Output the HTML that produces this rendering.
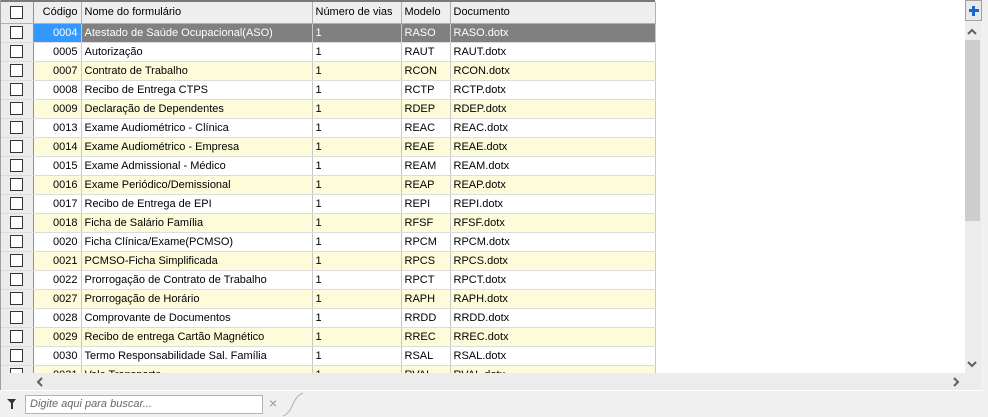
<!DOCTYPE html>
<html><head><meta charset="utf-8"><style>
*{margin:0;padding:0;box-sizing:border-box}
body{width:988px;height:417px;background:#f0f0f0;font-family:"Liberation Sans",sans-serif;font-size:11px;color:#000;position:relative;overflow:hidden}
#grid{position:absolute;left:0;top:0;width:965px;height:373px;background:#fff;overflow:hidden;border-left:1px solid #a0a0a0}
table{border-collapse:collapse;table-layout:fixed;position:absolute;left:0;top:0}
td,th{height:19px;border-right:1px solid #c8c8c8;border-bottom:1px solid #dcdcdc;padding:0 3px;white-space:nowrap;overflow:hidden;font-weight:normal;text-align:left}
th{height:22px;background:#eeeeee;border-top:2px solid #7a7a7a;border-right:1px solid #b0b0b0;border-bottom:1px solid #b0b0b0}
td.cb,th.cb{background:#ececec;border-right:1px solid #909090;padding:0}
.box{width:13px;height:13px;border:1px solid #333;background:#fff;margin-left:9px}
td.c{text-align:right}
tr.y td{background:#fdfbd9}
tr.y td.cb{background:#ececec}
tr.s td{background:#808080;color:#fff}
tr.s td.c{background:#3399ff}
tr.s td.cb{background:#ececec}
</style></head><body>
<div id="grid"><table>
<colgroup><col style="width:32px"><col style="width:48px"><col style="width:231px"><col style="width:89px"><col style="width:49px"><col style="width:205px"></colgroup>
<tr><th class="cb"><div class="box"></div></th><th style="text-align:right">Código</th><th>Nome do formulário</th><th>Número de vias</th><th>Modelo</th><th>Documento</th></tr>
<tr class="s"><td class="cb"><div class="box"></div></td><td class="c">0004</td><td>Atestado de Saúde Ocupacional(ASO)</td><td>1</td><td>RASO</td><td>RASO.dotx</td></tr>
<tr><td class="cb"><div class="box"></div></td><td class="c">0005</td><td>Autorização</td><td>1</td><td>RAUT</td><td>RAUT.dotx</td></tr>
<tr class="y"><td class="cb"><div class="box"></div></td><td class="c">0007</td><td>Contrato de Trabalho</td><td>1</td><td>RCON</td><td>RCON.dotx</td></tr>
<tr><td class="cb"><div class="box"></div></td><td class="c">0008</td><td>Recibo de Entrega CTPS</td><td>1</td><td>RCTP</td><td>RCTP.dotx</td></tr>
<tr class="y"><td class="cb"><div class="box"></div></td><td class="c">0009</td><td>Declaração de Dependentes</td><td>1</td><td>RDEP</td><td>RDEP.dotx</td></tr>
<tr><td class="cb"><div class="box"></div></td><td class="c">0013</td><td>Exame Audiométrico - Clínica</td><td>1</td><td>REAC</td><td>REAC.dotx</td></tr>
<tr class="y"><td class="cb"><div class="box"></div></td><td class="c">0014</td><td>Exame Audiométrico - Empresa</td><td>1</td><td>REAE</td><td>REAE.dotx</td></tr>
<tr><td class="cb"><div class="box"></div></td><td class="c">0015</td><td>Exame Admissional - Médico</td><td>1</td><td>REAM</td><td>REAM.dotx</td></tr>
<tr class="y"><td class="cb"><div class="box"></div></td><td class="c">0016</td><td>Exame Periódico/Demissional</td><td>1</td><td>REAP</td><td>REAP.dotx</td></tr>
<tr><td class="cb"><div class="box"></div></td><td class="c">0017</td><td>Recibo de Entrega de EPI</td><td>1</td><td>REPI</td><td>REPI.dotx</td></tr>
<tr class="y"><td class="cb"><div class="box"></div></td><td class="c">0018</td><td>Ficha de Salário Família</td><td>1</td><td>RFSF</td><td>RFSF.dotx</td></tr>
<tr><td class="cb"><div class="box"></div></td><td class="c">0020</td><td>Ficha Clínica/Exame(PCMSO)</td><td>1</td><td>RPCM</td><td>RPCM.dotx</td></tr>
<tr class="y"><td class="cb"><div class="box"></div></td><td class="c">0021</td><td>PCMSO-Ficha Simplificada</td><td>1</td><td>RPCS</td><td>RPCS.dotx</td></tr>
<tr><td class="cb"><div class="box"></div></td><td class="c">0022</td><td>Prorrogação de Contrato de Trabalho</td><td>1</td><td>RPCT</td><td>RPCT.dotx</td></tr>
<tr class="y"><td class="cb"><div class="box"></div></td><td class="c">0027</td><td>Prorrogação de Horário</td><td>1</td><td>RAPH</td><td>RAPH.dotx</td></tr>
<tr><td class="cb"><div class="box"></div></td><td class="c">0028</td><td>Comprovante de Documentos</td><td>1</td><td>RRDD</td><td>RRDD.dotx</td></tr>
<tr class="y"><td class="cb"><div class="box"></div></td><td class="c">0029</td><td>Recibo de entrega Cartão Magnético</td><td>1</td><td>RREC</td><td>RREC.dotx</td></tr>
<tr><td class="cb"><div class="box"></div></td><td class="c">0030</td><td>Termo Responsabilidade Sal. Família</td><td>1</td><td>RSAL</td><td>RSAL.dotx</td></tr>
<tr class="y"><td class="cb"><div class="box"></div></td><td class="c">0031</td><td>Vale Transporte</td><td>1</td><td>RVAL</td><td>RVAL.dotx</td></tr>
</table>
<div style="position:absolute;left:654px;top:0;width:311px;height:2px;background:#fff"></div>
</div>
<div style="position:absolute;left:965px;top:0;width:17px;height:21px;border:1px solid #a0a0a0;background:#e8e8e8"></div>
<div style="position:absolute;left:969px;top:9px;width:10px;height:3px;background:#1a66cc"></div>
<div style="position:absolute;left:972px;top:6px;width:3px;height:10px;background:#1a66cc"></div>
<div style="position:absolute;left:965px;top:22px;width:16px;height:369px;background:#ececec"></div>
<div style="position:absolute;left:965px;top:40px;width:15px;height:181px;background:#cdcdcd"></div>
<svg style="position:absolute;left:967px;top:28px" width="10" height="8"><path d="M1 6 L5 2 L9 6" stroke="#606060" stroke-width="2" fill="none"/></svg>
<svg style="position:absolute;left:967px;top:360px" width="10" height="8"><path d="M1 2 L5 6 L9 2" stroke="#606060" stroke-width="2" fill="none"/></svg>
<div style="position:absolute;left:0;top:373px;width:965px;height:17px;background:#ececec;border-left:1px solid #a0a0a0"></div>
<svg style="position:absolute;left:36px;top:377px" width="8" height="10"><path d="M6 1 L2 5 L6 9" stroke="#606060" stroke-width="2" fill="none"/></svg>
<svg style="position:absolute;left:952px;top:377px" width="8" height="10"><path d="M2 1 L6 5 L2 9" stroke="#606060" stroke-width="2" fill="none"/></svg>
<div style="position:absolute;left:0;top:390px;width:983px;height:1px;background:#fff"></div>
<svg style="position:absolute;left:7px;top:398px" width="10" height="12"><path d="M0 1 H9 L6 5 V11 H4 V5 Z" fill="#333"/></svg>
<div style="position:absolute;left:25px;top:395px;width:238px;height:19px;background:#fff;border:1px solid #b4b4b4;font-style:italic;color:#666;padding:2px 4px;font-size:11px">Digite aqui para buscar...</div>
<div style="position:absolute;left:269px;top:395px;color:#999;font-size:14px">×</div>
<svg style="position:absolute;left:283px;top:392px" width="20" height="25"><path d="M0 24 Q6 22 10 12 Q14 3 20 1" stroke="#b0b0b0" fill="none"/></svg>
</body></html>
